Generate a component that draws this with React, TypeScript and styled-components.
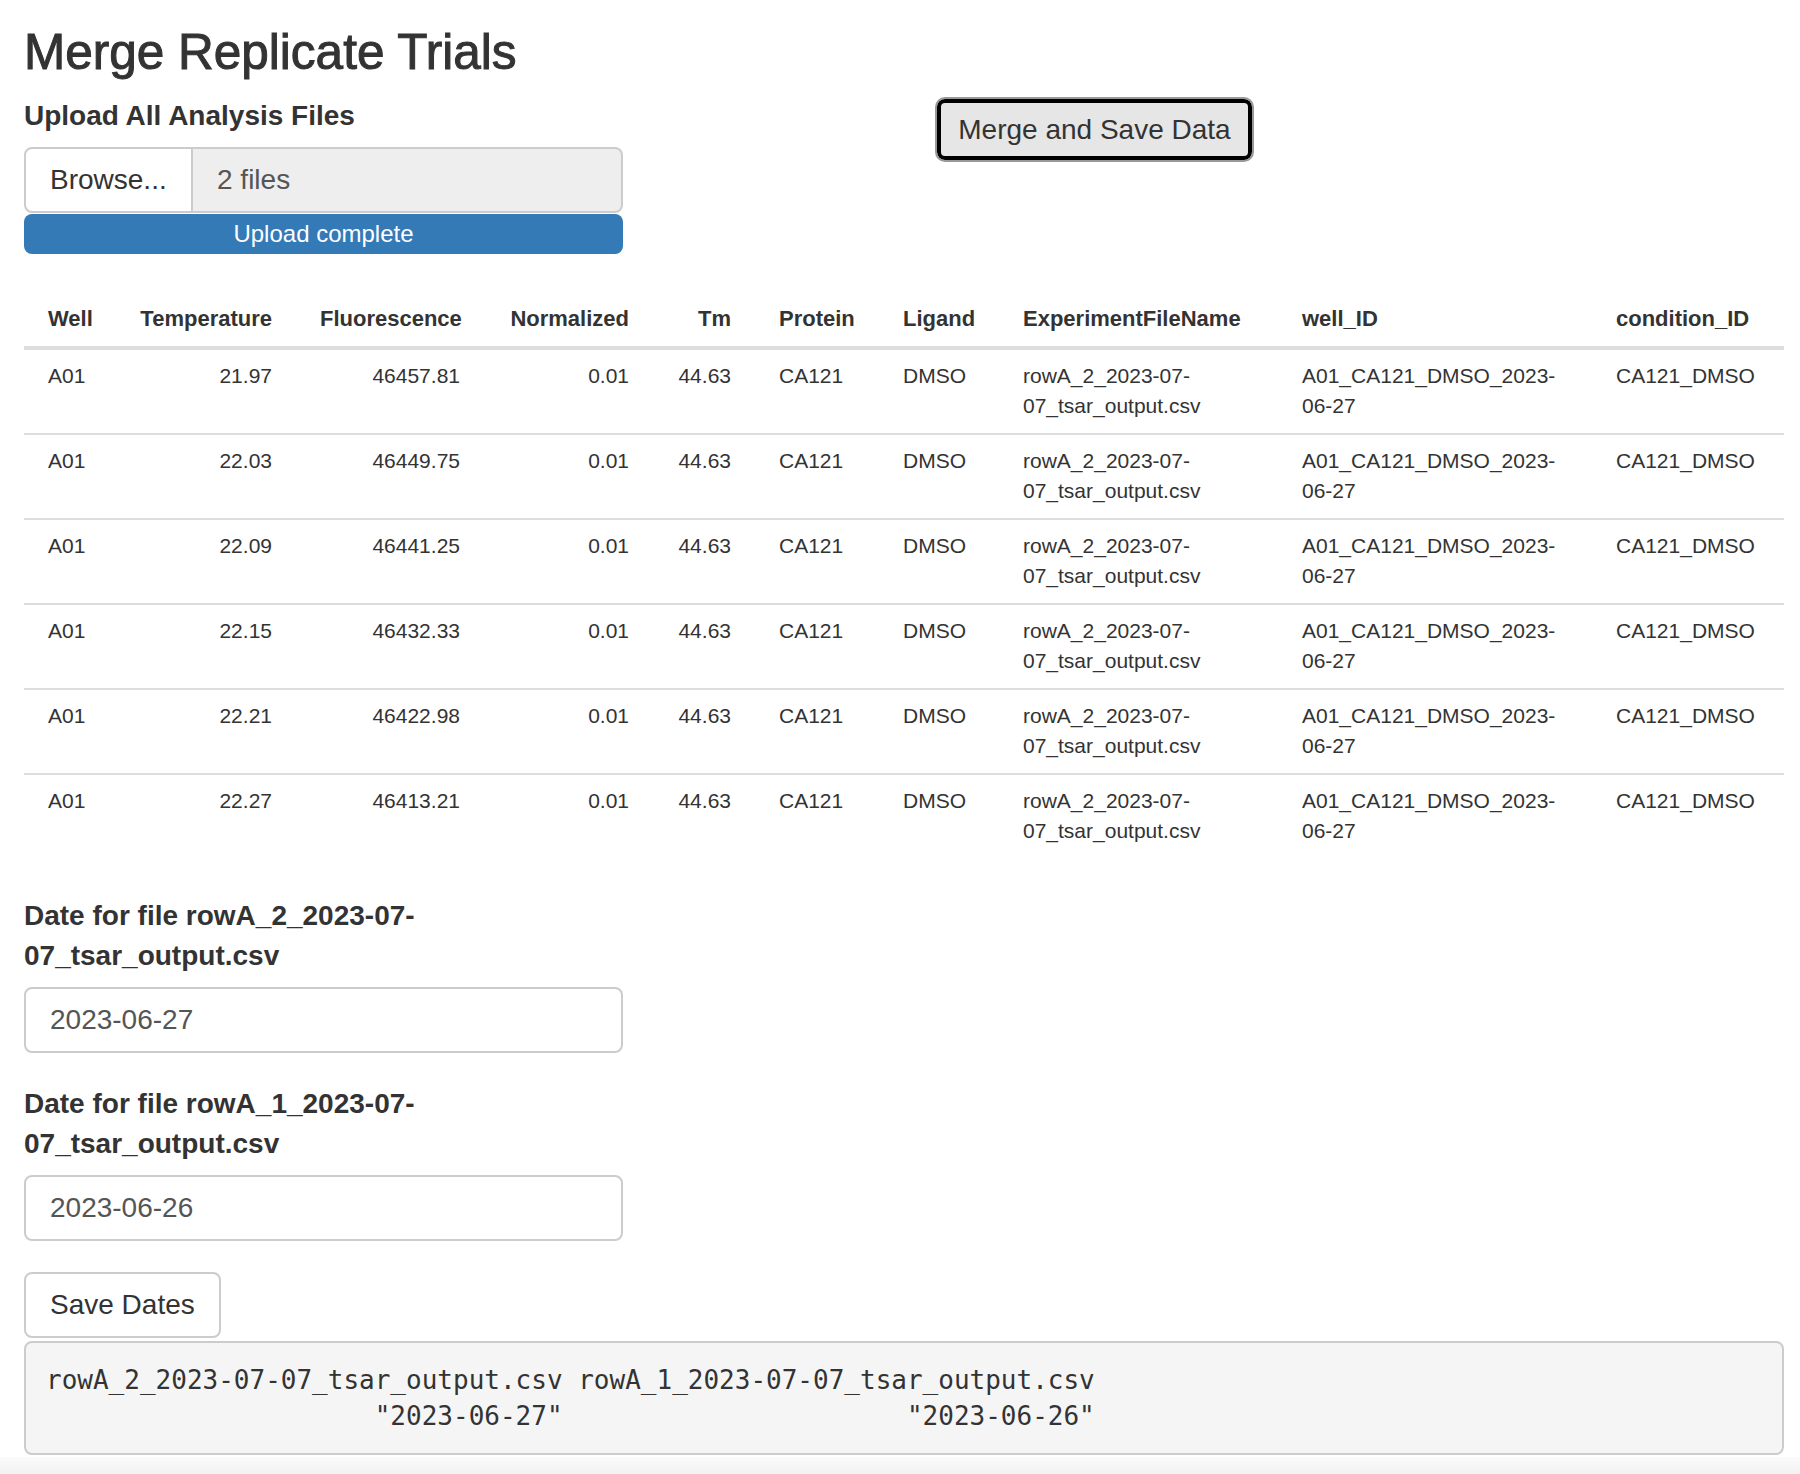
import React from "react";
import styled, { createGlobalStyle } from "styled-components";

const GlobalStyle = createGlobalStyle`
  html, body { margin: 0; padding: 0; background: #ffffff; }
  body {
    font-family: "Liberation Sans", Arial, Helvetica, sans-serif;
    color: #333333;
  }
  *, *::before, *::after { box-sizing: border-box; }
`;

const Page = styled.div`
  min-height: 100vh;
  display: flex;
  flex-direction: column;
`;

const Content = styled.main`
  padding: 25px 16px 2px 24px;
`;

const Title = styled.h3`
  margin: 0;
  font-size: 49.5px;
  line-height: 53px;
  font-weight: 400;
  -webkit-text-stroke: 1px #333333;
  color: #333333;
`;

const TopRow = styled.div`
  margin-top: 18px;
  display: grid;
  grid-template-columns: 599px auto;
  column-gap: 312px;
  align-items: start;
`;

const Column = styled.div`
  display: flex;
  flex-direction: column;
`;

const FieldLabel = styled.label`
  display: block;
  font-size: 28px;
  line-height: 40px;
  font-weight: 700;
  color: #333333;
  margin-bottom: 11px;
`;

const FileGroup = styled.div`
  display: flex;
  height: 66px;
`;

const BrowseButton = styled.span`
  display: flex;
  align-items: center;
  width: 169px;
  padding: 0 24px;
  font-size: 28px;
  line-height: 40px;
  color: #333333;
  background: #ffffff;
  border: 2px solid #cccccc;
  border-radius: 8px 0 0 8px;
`;

const FileName = styled.span`
  flex: 1;
  display: flex;
  align-items: center;
  padding: 0 24px;
  font-size: 28px;
  line-height: 40px;
  color: #555555;
  background: #eeeeee;
  border: 2px solid #cccccc;
  border-left: 0;
  border-radius: 0 8px 8px 0;
`;

const ProgressBar = styled.div`
  margin-top: 1px;
  height: 40px;
  border-radius: 8px;
  background: #337ab7;
  color: #ffffff;
  font-size: 24px;
  line-height: 40px;
  text-align: center;
`;

const MergeButton = styled.button`
  margin-top: 1px;
  width: 319px;
  height: 65px;
  font-family: inherit;
  font-size: 28px;
  line-height: 40px;
  color: #333333;
  background: #e6e6e6;
  border: 2px solid #999999;
  border-radius: 10px;
  box-shadow: inset 0 0 0 4px #000000;
  padding: 0;
  cursor: pointer;
`;

const Table = styled.table`
  margin-top: 38px;
  width: 100%;
  table-layout: fixed;
  border-collapse: separate;
  border-spacing: 0;
  font-size: 21px;
  line-height: 30px;
  color: #333333;
`;

const HeadCell = styled.th<{ $right?: boolean }>`
  padding: 12px 24px;
  font-size: 22px;
  font-weight: 700;
  text-align: ${(p) => (p.$right ? "right" : "left")};
  border-bottom: 4px solid #dddddd;
  white-space: nowrap;
`;

const Row = styled.tr`
  & + & > td {
    border-top: 2px solid #dddddd;
  }
`;

const Cell = styled.td<{ $right?: boolean }>`
  padding: 11px 24px 12px;
  vertical-align: top;
  text-align: ${(p) => (p.$right ? "right" : "left")};
  height: 83px;
`;

const DateSection = styled.section`
  margin-top: 38px;
  width: 599px;
`;

const FormGroup = styled.div`
  margin-bottom: 31px;
`;

const TextInput = styled.div`
  height: 66px;
  display: flex;
  align-items: center;
  padding: 0 24px;
  font-size: 28px;
  line-height: 40px;
  color: #555555;
  background: #ffffff;
  border: 2px solid #cccccc;
  border-radius: 8px;
`;

const PlainButton = styled.button`
  height: 66px;
  padding: 0 24px;
  font-family: inherit;
  font-size: 28px;
  line-height: 40px;
  color: #333333;
  background: #ffffff;
  border: 2px solid #cccccc;
  border-radius: 8px;
  cursor: pointer;
`;

const Output = styled.pre`
  margin: 3px 0 0;
  padding: 19px 20px;
  font-family: "DejaVu Sans Mono", "Liberation Mono", monospace;
  font-size: 26px;
  line-height: 36px;
  color: #333333;
  background: #f5f5f5;
  border: 2px solid #cccccc;
  border-radius: 8px;
  white-space: pre;
  overflow: hidden;
`;

const BottomShade = styled.div`
  flex: 1;
  background: linear-gradient(#fafafa, #f2f2f2);
`;

type Col = { key: string; label: string; width: number; right?: boolean };

const columns: Col[] = [
  { key: "well", label: "Well", width: 92 },
  { key: "temp", label: "Temperature", width: 180, right: true },
  { key: "fluor", label: "Fluorescence", width: 188, right: true },
  { key: "norm", label: "Normalized", width: 169, right: true },
  { key: "tm", label: "Tm", width: 102, right: true },
  { key: "protein", label: "Protein", width: 124 },
  { key: "ligand", label: "Ligand", width: 120 },
  { key: "file", label: "ExperimentFileName", width: 279 },
  { key: "wellId", label: "well_ID", width: 314 },
  { key: "cond", label: "condition_ID", width: 192 },
];

const temps = ["21.97", "22.03", "22.09", "22.15", "22.21", "22.27"];
const fluors = ["46457.81", "46449.75", "46441.25", "46432.33", "46422.98", "46413.21"];

const rows: Record<string, string>[] = temps.map((t, i) => ({
  well: "A01",
  temp: t,
  fluor: fluors[i],
  norm: "0.01",
  tm: "44.63",
  protein: "CA121",
  ligand: "DMSO",
  file: "rowA_2_2023-07-07_tsar_output.csv",
  wellId: "A01_CA121_DMSO_2023-06-27",
  cond: "CA121_DMSO",
}));

const dates = [
  { file: "rowA_2_2023-07-07_tsar_output.csv", date: "2023-06-27" },
  { file: "rowA_1_2023-07-07_tsar_output.csv", date: "2023-06-26" },
];

const outputText =
  "rowA_2_2023-07-07_tsar_output.csv rowA_1_2023-07-07_tsar_output.csv \n" +
  '                     "2023-06-27"                      "2023-06-26" ';

export default function App() {
  return (
    <Page>
      <GlobalStyle />
      <Content>
        <Title>Merge Replicate Trials</Title>
        <TopRow>
          <Column>
            <FieldLabel>Upload All Analysis Files</FieldLabel>
            <FileGroup>
              <BrowseButton>Browse...</BrowseButton>
              <FileName>2 files</FileName>
            </FileGroup>
            <ProgressBar>Upload complete</ProgressBar>
          </Column>
          <MergeButton>Merge and Save Data</MergeButton>
        </TopRow>

        <Table>
          <colgroup>
            {columns.map((c) => (
              <col key={c.key} style={{ width: c.width }} />
            ))}
          </colgroup>
          <thead>
            <tr>
              {columns.map((c) => (
                <HeadCell key={c.key} $right={c.right}>
                  {c.label}
                </HeadCell>
              ))}
            </tr>
          </thead>
          <tbody>
            {rows.map((r, i) => (
              <Row key={i}>
                {columns.map((c) => (
                  <Cell key={c.key} $right={c.right}>
                    {r[c.key]}
                  </Cell>
                ))}
              </Row>
            ))}
          </tbody>
        </Table>

        <DateSection>
          {dates.map((d) => (
            <FormGroup key={d.file}>
              <FieldLabel>Date for file {d.file}</FieldLabel>
              <TextInput>{d.date}</TextInput>
            </FormGroup>
          ))}
          <PlainButton>Save Dates</PlainButton>
        </DateSection>
        <Output>{outputText}</Output>
      </Content>
      <BottomShade />
    </Page>
  );
}
